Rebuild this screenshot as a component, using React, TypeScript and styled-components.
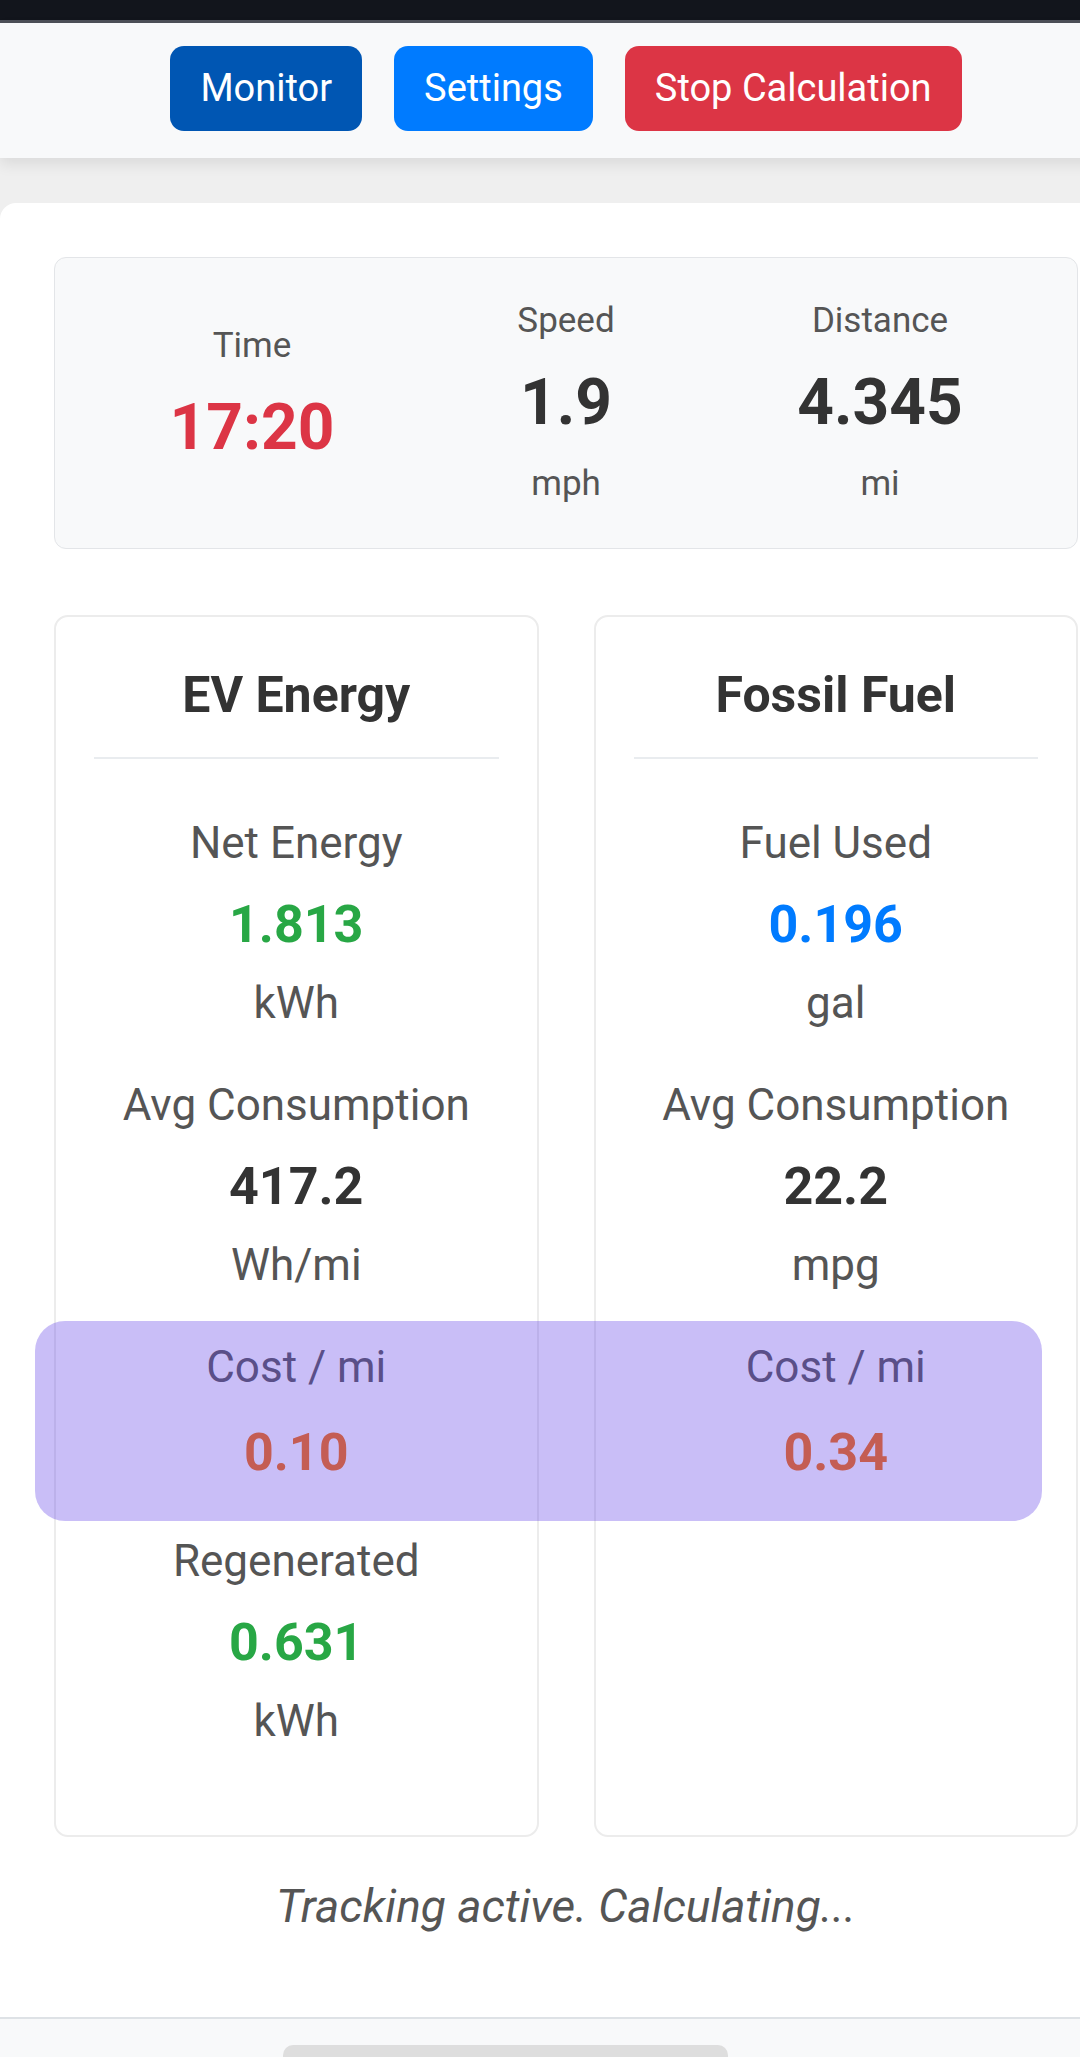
import React from "react";
import styled, { createGlobalStyle } from "styled-components";

const Global = createGlobalStyle`
  html, body {
    margin: 0;
    padding: 0;
    overflow: hidden;
    background: #efefef;
  }
  body {
    font-family: Roboto, "Noto Sans", "Liberation Sans", sans-serif;
    color: #333;
  }
  * { box-sizing: border-box; }
`;

const Page = styled.div`
  width: 1132px;
  min-height: 2057px;
  display: flex;
  flex-direction: column;
`;

const StatusBar = styled.div`
  height: 23px;
  background: #12151c;
  border-bottom: 3px solid #4d5058;
`;

const Header = styled.header`
  background: #f8f9fa;
  padding: 23px 0 27px;
  display: flex;
  justify-content: center;
  gap: 32px;
  box-shadow: 0 6px 14px rgba(0, 0, 0, 0.09);
  position: relative;
  z-index: 1;
`;

const Button = styled.button<{ $bg: string }>`
  font-family: Roboto, "Liberation Sans", sans-serif;
  font-size: 38px;
  line-height: 57px;
  padding: 14px 30px;
  border: none;
  border-radius: 14px;
  color: #fff;
  background: ${(p) => p.$bg};
`;

const Main = styled.main`
  margin-top: 45px;
  background: #fff;
  border-radius: 16px 16px 0 0;
  padding: 54px 54px 79px;
  display: flex;
  flex-direction: column;
`;

const StatsBox = styled.section`
  background: #f8f9fa;
  border: 1px solid #e3e5e8;
  border-radius: 12px;
  padding: 38px 40px 39px;
  display: grid;
  grid-template-columns: repeat(3, 1fr);
  align-items: center;
`;

const StatCol = styled.div`
  display: flex;
  flex-direction: column;
  align-items: center;
`;

const StatLabel = styled.div`
  font-size: 35px;
  line-height: 50px;
  color: #555;
`;

const StatValue = styled.div<{ $color?: string }>`
  font-size: 64px;
  line-height: 77px;
  font-weight: 700;
  margin: 18px 0;
  color: ${(p) => p.$color ?? "#333"};
`;

const StatUnit = styled.div`
  font-size: 35px;
  line-height: 50px;
  color: #555;
`;

const CardsWrap = styled.div`
  position: relative;
  margin-top: 66px;
  display: grid;
  grid-template-columns: 1fr 1fr;
  gap: 55px;
`;

const Card = styled.div`
  border: 2px solid #ececec;
  border-radius: 14px;
  padding: 48px 38px 84px;
  display: flex;
  flex-direction: column;
  align-items: stretch;
`;

const CardTitle = styled.h2`
  margin: 0 0 54px;
  font-size: 50px;
  line-height: 60px;
  font-weight: 700;
  text-align: center;
  color: #333;
  padding-bottom: 32px;
  border-bottom: 2px solid #e9ecef;
`;

const Metrics = styled.div`
  display: flex;
  flex-direction: column;
  gap: 42px;
`;

const Metric = styled.div<{ $extra?: number }>`
  display: flex;
  flex-direction: column;
  align-items: center;
  margin-bottom: ${(p) => p.$extra ?? 0}px;
`;

const MetricLabel = styled.div`
  font-size: 44px;
  line-height: 60px;
  color: #555;
`;

const MetricValue = styled.div<{ $color?: string; $shift?: number }>`
  font-size: 52px;
  line-height: 62px;
  font-weight: 700;
  margin-top: ${(p) => 21 + (p.$shift ?? 0)}px;
  color: ${(p) => p.$color ?? "#333"};
`;

const MetricUnit = styled.div`
  font-size: 44px;
  line-height: 60px;
  margin-top: 17px;
  color: #555;
`;

const Highlight = styled.div`
  position: absolute;
  left: -19px;
  top: 706px;
  width: 1007px;
  height: 200px;
  border-radius: 30px;
  background: rgba(100, 70, 232, 0.35);
  pointer-events: none;
`;

const StatusText = styled.p`
  margin: 37px 0 0;
  text-align: center;
  font-style: italic;
  font-size: 46px;
  line-height: 64px;
  color: #555;
`;

const Footer = styled.footer`
  flex: 1;
  background: #f8f9fa;
  border-top: 2px solid #dee2e6;
  padding: 26px 0 0 283px;
`;

const FooterPill = styled.div`
  width: 445px;
  height: 60px;
  background: #dedede;
  border-radius: 10px;
`;

type Item = { label: string; value: string; unit?: string; color?: string; extra?: number; shift?: number };

const GREEN = "#28a745";
const BLUE = "#007bff";
const ORANGE = "#f86a05";

const ev: Item[] = [
  { label: "Net Energy", value: "1.813", unit: "kWh", color: GREEN },
  { label: "Avg Consumption", value: "417.2", unit: "Wh/mi" },
  { label: "Cost / mi", value: "0.10", color: ORANGE, extra: 5, shift: 4 },
  { label: "Regenerated", value: "0.631", unit: "kWh", color: GREEN },
];

const fossil: Item[] = [
  { label: "Fuel Used", value: "0.196", unit: "gal", color: BLUE },
  { label: "Avg Consumption", value: "22.2", unit: "mpg" },
  { label: "Cost / mi", value: "0.34", color: ORANGE, extra: 5, shift: 4 },
];

function MetricCard({ title, items }: { title: string; items: Item[] }) {
  return (
    <Card>
      <CardTitle>{title}</CardTitle>
      <Metrics>
        {items.map((it, i) => (
          <Metric key={i} $extra={it.extra}>
            <MetricLabel>{it.label}</MetricLabel>
            <MetricValue $color={it.color} $shift={it.shift}>{it.value}</MetricValue>
            {it.unit && <MetricUnit>{it.unit}</MetricUnit>}
          </Metric>
        ))}
      </Metrics>
    </Card>
  );
}

export default function App() {
  return (
    <>
      <Global />
      <Page>
        <StatusBar />
        <Header>
          <Button $bg="#0056b3">Monitor</Button>
          <Button $bg="#007bff">Settings</Button>
          <Button $bg="#dc3545">Stop Calculation</Button>
        </Header>
        <Main>
          <StatsBox>
            <StatCol>
              <StatLabel>Time</StatLabel>
              <StatValue $color="#dc3545">17:20</StatValue>
            </StatCol>
            <StatCol>
              <StatLabel>Speed</StatLabel>
              <StatValue>1.9</StatValue>
              <StatUnit>mph</StatUnit>
            </StatCol>
            <StatCol>
              <StatLabel>Distance</StatLabel>
              <StatValue>4.345</StatValue>
              <StatUnit>mi</StatUnit>
            </StatCol>
          </StatsBox>
          <CardsWrap>
            <MetricCard title="EV Energy" items={ev} />
            <MetricCard title="Fossil Fuel" items={fossil} />
            <Highlight />
          </CardsWrap>
          <StatusText>Tracking active. Calculating...</StatusText>
        </Main>
        <Footer>
          <FooterPill />
        </Footer>
      </Page>
    </>
  );
}
